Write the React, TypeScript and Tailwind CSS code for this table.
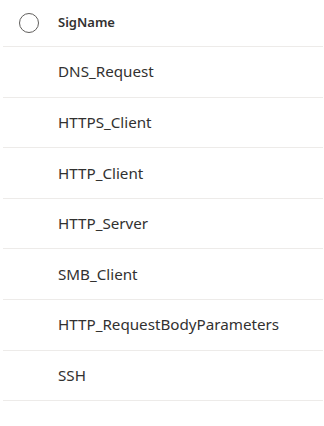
const rows = [
  "DNS_Request",
  "HTTPS_Client",
  "HTTP_Client",
  "HTTP_Server",
  "SMB_Client",
  "HTTP_RequestBodyParameters",
  "SSH",
];

export default function App() {
  return (
    <div
      className="h-[426px] w-[324px] bg-white pl-[3px] pr-[1px] text-[#323130]"
      style={{ fontFamily: '"Segoe UI", "Noto Sans", sans-serif' }}
    >
      <div className="flex h-[47px] items-center border-b border-[#edebe9]">
        <span className="ml-[16px] block h-[20px] w-[20px] rounded-full border-[1.5px] border-[#605e5c]" />
        <span className="ml-[19px] text-[13px] font-semibold">SigName</span>
      </div>
      {rows.map((r) => (
        <div
          key={r}
          className="flex h-[50.6px] items-center border-b border-[#edebe9] pl-[55px] text-[15.2px]"
        >
          {r}
        </div>
      ))}
    </div>
  );
}
